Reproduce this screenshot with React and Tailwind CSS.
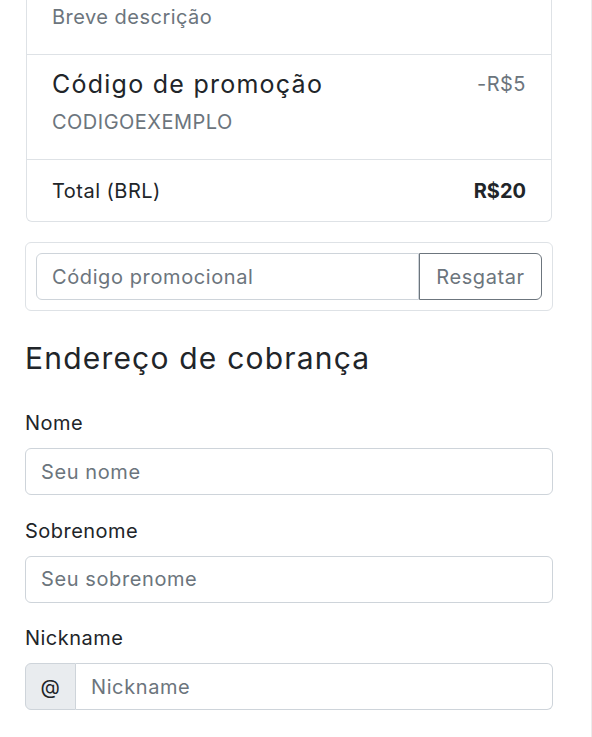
const FONT = "font-['Inter','Liberation_Sans',sans-serif] tracking-[0.03em]"

function Field({ label, hint, placeholder, prefix }) {
  return (
    <div className="flex flex-col">
      <label className="text-[20px] leading-[30px] text-[#212529] mb-[10px]">
        {label} {hint && <span className="text-[#6c757d]">{hint}</span>}
      </label>
      <div className="flex h-[47px]">
        {prefix && (
          <span className="w-[51px] flex items-center justify-center bg-[#e9ecef] border border-[#ced4da] rounded-l-[6px] text-[20px] text-[#212529]">
            {prefix}
          </span>
        )}
        <input
          placeholder={placeholder}
          className={`flex-1 min-w-0 border border-[#ced4da] ${prefix ? 'border-l-0 rounded-r-[6px]' : 'rounded-[6px]'} px-[15px] text-[20px] tracking-[0.03em] text-[#212529] placeholder:text-[#6c757d] bg-white outline-none`}
        />
      </div>
    </div>
  )
}

export default function App() {
  return (
    <div className={`${FONT} bg-white w-full h-[737px] overflow-hidden border-r border-[#ececec] pl-[25px] pr-[38px]`}>
      {/* Cart summary */}
      <div className="mx-px border border-t-0 border-[#dee2e6] rounded-b-[6px]">
        <div className="h-[55px] border-b border-[#dee2e6] px-[25px] pt-[2px]">
          <div className="text-[20px] leading-[30px] text-[#6c757d]">Breve descrição</div>
        </div>
        <div className="h-[105px] border-b border-[#dee2e6] px-[25px] pt-[14px] flex justify-between">
          <div>
            <div className="text-[25px] leading-[30px] tracking-[0.05em] text-[#212529]">Código de promoção</div>
            <div className="mt-[8px] text-[20px] leading-[30px] text-[#6c757d]">CODIGOEXEMPLO</div>
          </div>
          <span className="text-[20px] leading-[30px] text-[#6c757d]">-R$5</span>
        </div>
        <div className="h-[61px] px-[25px] flex items-center justify-between">
          <span className="text-[20px] text-[#212529]">Total (BRL)</span>
          <strong className="text-[20px] font-bold tracking-normal text-[#212529]">R$20</strong>
        </div>
      </div>

      {/* Promo code */}
      <div className="mt-[20px] border border-[#dee2e6] rounded-[6px] p-[10px] flex">
        <input
          placeholder="Código promocional"
          className="flex-1 min-w-0 h-[47px] border border-[#ced4da] rounded-l-[6px] px-[15px] text-[20px] tracking-[0.03em] placeholder:text-[#6c757d] outline-none"
        />
        <button className="h-[47px] w-[123px] border border-[#6c757d] rounded-r-[6px] text-[20px] tracking-[0.03em] text-[#6c757d] bg-white">
          Resgatar
        </button>
      </div>

      {/* Billing address */}
      <h4 className="mt-[29px] text-[30px] leading-[36px] font-normal tracking-[0.04em] text-[#212529]">Endereço de cobrança</h4>
      <div className="mt-[32px] flex flex-col gap-[20.5px]">
        <Field label="Nome" placeholder="Seu nome" />
        <Field label="Sobrenome" placeholder="Seu sobrenome" />
        <Field label="Nickname" placeholder="Nickname" prefix="@" />
        <Field label="Email" hint="(Opcional)" placeholder="voce@exemplo.com" />
      </div>
    </div>
  )
}
